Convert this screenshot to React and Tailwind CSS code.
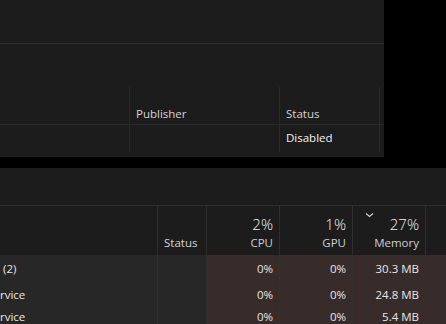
import React from "react";

const font = { fontFamily: '"Open Sans", "Noto Sans", sans-serif' };

const rows = [
  { name: "(2)", cpu: "0%", gpu: "0%", mem: "30.3 MB", h: "h-[28px]", pad: "pl-[3px]" },
  { name: "rvice", cpu: "0%", gpu: "0%", mem: "24.8 MB", h: "h-[23px]", pad: "pl-0" },
  { name: "rvice", cpu: "0%", gpu: "0%", mem: "5.4 MB", h: "h-[22px]", pad: "pl-0" },
];

const StartupWindow = () => (
  <div className="w-[384px] h-[157px] bg-[#1c1c1c] flex flex-col">
    <div className="h-[44px] border-b border-[#2e2e2e]"></div>
    <div className="h-[43px]"></div>
    <div className="flex h-[38px] border-b border-[#2b2b2b] text-[11.5px] text-[#d4d4d4]">
      <div className="w-[130px] border-r border-[#2a2a2a]"></div>
      <div className="w-[150px] border-r border-[#2a2a2a] flex items-end pb-[2px] pl-[6px]">
        Publisher
      </div>
      <div className="w-[100px] border-r border-[#2a2a2a] flex items-end pb-[2px] pl-[6px]">
        Status
      </div>
    </div>
    <div className="flex h-[27px] text-[11.5px] text-[#f2f2f2]">
      <div className="w-[130px] border-r border-[#2a2a2a]"></div>
      <div className="w-[150px] border-r border-[#2a2a2a]"></div>
      <div className="w-[100px] border-r border-[#2a2a2a] flex items-center pl-[6px] pb-[1px]">
        Disabled
      </div>
    </div>
  </div>
);

const HeadCell = ({ pct, label, chevron }) => (
  <div className="relative w-[73px] border-r border-[#2e2e2e] flex flex-col items-end justify-end pr-[6px] pb-[3px]">
    {chevron && (
      <svg
        className="absolute left-[12px] top-[6px]"
        width="9"
        height="6"
        viewBox="0 0 9 6"
        fill="none"
        stroke="#cfcfcf"
        strokeWidth="1.2"
      >
        <path d="M1 1.5 L4.5 4.5 L8 1.5" />
      </svg>
    )}
    <span className="text-[15px] font-light leading-[20px] text-[#f0f0f0]">{pct}</span>
    <span className="text-[11.5px] leading-[18px] text-[#cfcfcf]">{label}</span>
  </div>
);

const ProcessesWindow = () => (
  <div className="w-[446px] h-[156px] bg-[#1c1c1c] flex flex-col overflow-hidden">
    <div className="h-[38px] border-b border-[#2e2e2e] shrink-0"></div>
    <div className="flex h-[49px] shrink-0">
      <div className="w-[158px] border-r border-[#2e2e2e]"></div>
      <div className="w-[49px] border-r border-[#2e2e2e] flex items-end pl-[6px] pb-[3px] text-[11.5px] leading-[18px] text-[#d4d4d4]">
        Status
      </div>
      <HeadCell pct="2%" label="CPU" />
      <HeadCell pct="1%" label="GPU" />
      <HeadCell pct="27%" label="Memory" chevron />
      <div className="flex-1"></div>
    </div>
    {rows.map((r, i) => (
      <div key={i} className={`flex shrink-0 ${r.h} text-[11.5px] text-[#e6e6e6]`}>
        <div className={`w-[158px] bg-[#272727] border-r border-[#2f2f2f] flex items-center ${r.pad}`}>
          {r.name}
        </div>
        <div className="w-[49px] bg-[#272727] border-r border-[#2f2f2f]"></div>
        <div className="w-[73px] bg-[#382c2a] border-r border-[#33302f] flex items-center justify-end pr-[6px]">
          {r.cpu}
        </div>
        <div className="w-[73px] bg-[#382c2a] border-r border-[#33302f] flex items-center justify-end pr-[6px]">
          {r.gpu}
        </div>
        <div className="w-[73px] bg-[#382c2a] border-r border-[#33302f] flex items-center justify-end pr-[6px]">
          {r.mem}
        </div>
        <div className="flex-1 bg-[#382c2a]"></div>
      </div>
    ))}
  </div>
);

export default function App() {
  return (
    <div className="w-[446px] h-[324px] bg-black overflow-hidden flex flex-col gap-[11px]" style={font}>
      <StartupWindow />
      <ProcessesWindow />
    </div>
  );
}
